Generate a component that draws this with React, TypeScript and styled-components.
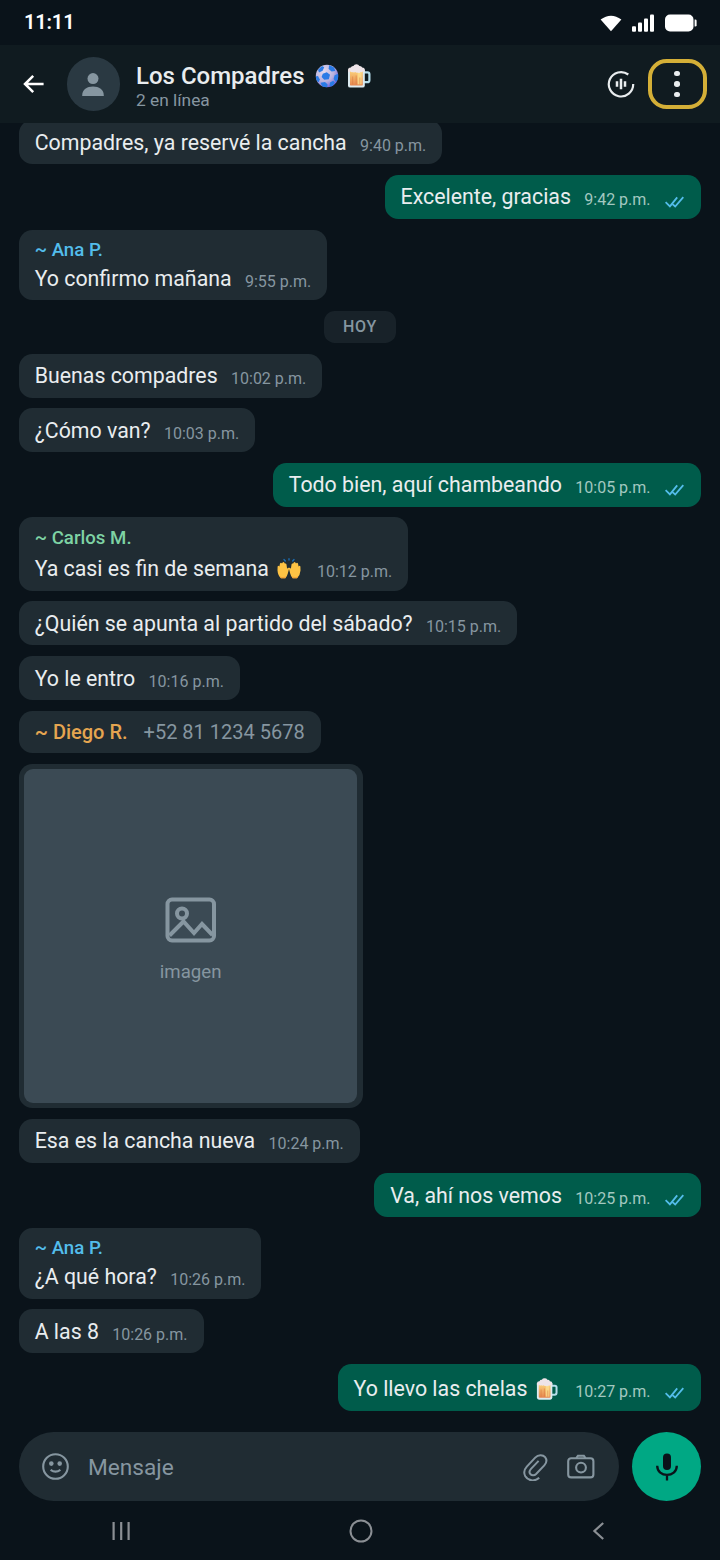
import React from "react";
import styled, { createGlobalStyle } from "styled-components";

const Global = createGlobalStyle`
  * { box-sizing: border-box; }
  html, body { margin: 0; padding: 0; background: #0a131a; }
  body { font-family: Roboto, "Liberation Sans", sans-serif; overflow: hidden; }
  svg { display: block; flex: none; }
`;

const Screen = styled.div`
  width: 720px;
  height: 1560px;
  display: flex;
  flex-direction: column;
  background: #0a131a;
  overflow: hidden;
`;

const StatusBar = styled.div`
  height: 45.33px;
  flex: none;
  display: flex;
  align-items: center;
  justify-content: space-between;
  padding: 0 23.5px 0 24px;
`;

const Clock = styled.div`
  font-size: 20px;
  line-height: 24px;
  font-weight: 600;
  color: #fff;
  margin-top: -1px;
  letter-spacing: -0.15px;
`;

const StatusIcons = styled.div`
  display: flex;
  align-items: center;
  gap: 9.8px;
  margin-top: 1px;
`;

const Header = styled.header`
  height: 77.33px;
  flex: none;
  display: flex;
  align-items: center;
  padding: 0 13.5px 0 21.33px;
  background: #101b20;
`;

const Avatar = styled.div`
  width: 53.33px;
  height: 53.33px;
  margin: 0 16px 0 20px;
  border-radius: 50%;
  background: #2a3942;
  display: flex;
  align-items: center;
  justify-content: center;
`;

const Heading = styled.div`
  flex: 1;
  padding-top: 3px;
`;

const GroupName = styled.div`
  display: flex;
  align-items: center;
  height: 29px;
  font-size: 24px;
  font-weight: 500;
  color: #e9edef;
  margin-top: 1px;
`;

const EmojiSlot = styled.span<{ $left: number; $right?: number }>`
  display: inline-flex;
  margin-left: ${(p) => p.$left}px;
  margin-right: ${(p) => p.$right ?? 0}px;
`;

const Presence = styled.div`
  font-size: 17.33px;
  line-height: 20px;
  color: #8696a0;
`;

const MenuButton = styled.div`
  width: 58.67px;
  height: 50.67px;
  margin-left: 12.6px;
  border: 4px solid #d4af37;
  border-radius: 18.67px;
  display: flex;
  flex-direction: column;
  align-items: center;
  justify-content: center;
  gap: 5.2px;
`;

const MenuDot = styled.span`
  width: 5.5px;
  height: 5.5px;
  border-radius: 50%;
  background: #e9edef;
`;

const Messages = styled.main`
  flex: 1;
  min-height: 0;
  overflow: hidden;
  display: flex;
  flex-direction: column;
  justify-content: flex-end;
  gap: 10.67px;
  padding: 0 18.67px 21.33px;
`;

const Bubble = styled.div<{ $out?: boolean; $height: number }>`
  flex: none;
  align-self: ${(p) => (p.$out ? "flex-end" : "flex-start")};
  height: ${(p) => p.$height}px;
  padding: 0 16px;
  border-radius: 13.33px;
  background: ${(p) => (p.$out ? "#005c4b" : "#202c33")};
  display: flex;
  flex-direction: column;
  justify-content: center;
`;

const Sender = styled.div<{ $color: string }>`
  font-size: 18.67px;
  line-height: 24px;
  font-weight: 500;
  color: ${(p) => p.$color};
  padding-top: 0.8px;
  margin-bottom: 2px;
`;

const Line = styled.div<{ $tall?: boolean }>`
  display: flex;
  align-items: center;
  white-space: nowrap;
  padding-top: ${(p) => (p.$tall ? 2.6 : 1)}px;
`;

const Body = styled.span`
  font-size: 21.33px;
  line-height: 28px;
  color: #e9edef;
  display: inline-flex;
  align-items: center;
`;

const Time = styled.span<{ $out?: boolean }>`
  font-size: 16px;
  line-height: 20px;
  margin-left: 13.33px;
  margin-top: 6px;
  color: ${(p) => (p.$out ? "#a3c8c0" : "#8696a0")};
`;

const TickSlot = styled.span`
  margin: 9px 0 0 14.3px;
  padding-right: 0.5px;
`;

const ContactLine = styled.div`
  display: flex;
  align-items: baseline;
  gap: 16px;
  font-size: 20px;
  color: #8696a0;
`;

const ContactName = styled.span`
  font-weight: 500;
  color: #e5a550;
`;

const DayChip = styled.div`
  flex: none;
  align-self: center;
  height: 32px;
  padding: 0 18.67px;
  border-radius: 10.67px;
  background: #182229;
  color: #8696a0;
  font-size: 16px;
  font-weight: 500;
  line-height: 32px;
  letter-spacing: 0.8px;
`;

const Photo = styled.div`
  flex: none;
  width: 344px;
  height: 344px;
  padding: 5.33px;
  border-radius: 13.33px;
  background: #202c33;
`;

const Placeholder = styled.div`
  height: 100%;
  border-radius: 9px;
  background: #3b4a54;
  display: flex;
  flex-direction: column;
  align-items: center;
  justify-content: center;
  gap: 18px;
  padding-top: 8px;
  font-size: 18.67px;
  line-height: 22px;
  color: #8696a0;
`;

const Composer = styled.div`
  flex: none;
  display: flex;
  gap: 13.33px;
  padding: 0 18.67px;
`;

const Field = styled.div`
  flex: 1;
  height: 69.33px;
  border-radius: 35px;
  background: #202c33;
  display: flex;
  align-items: center;
  padding: 0 23.3px 0 22.8px;
`;

const Hint = styled.span`
  flex: 1;
  margin-left: 17.6px;
  padding-top: 1px;
  font-size: 22.67px;
  color: #8696a0;
`;

const FieldIcons = styled.div`
  display: flex;
  align-items: center;
  gap: 19px;
`;

const MicButton = styled.div`
  width: 69.33px;
  height: 69.33px;
  border-radius: 50%;
  background: #00a884;
  display: flex;
  align-items: center;
  justify-content: center;
`;

const NavBar = styled.nav`
  flex: none;
  height: 58.67px;
  display: flex;
  align-items: center;
  justify-content: space-between;
  padding: 0 114px 0 112px;
`;

const Ball = () => (
  <svg width="24" height="24" viewBox="0 0 24 24">
    <defs>
      <radialGradient id="ball" cx="0.36" cy="0.3" r="0.82">
        <stop offset="0" stopColor="#e2daee" />
        <stop offset="0.55" stopColor="#b9b1dd" />
        <stop offset="1" stopColor="#5f50dc" />
      </radialGradient>
      <clipPath id="ballClip"><circle cx="12" cy="12" r="11.2" /></clipPath>
    </defs>
    <circle cx="12" cy="12" r="11.2" fill="url(#ball)" />
    <g fill="#2a7be6" clipPath="url(#ballClip)">
      <path d="M7.8 9.8l4-1.6 3.2 2.6-1.2 4.4-4.6.6-2.6-2.8z" />
      <path d="M3 5.800L7 2l2.200 1.200-1.600 3.600-3.600 1.600z" />
      <path d="M14.200 1l5 2.400 1 3.600-3.600.6-3-2.600z" />
      <path d="M19.600 11.200l4-1.600v6.400l-3 1.800-2-2.800z" />
      <path d="M.2 12.400l2.800-.4 1.800 3.400-1 2.800-2.800-1.400z" />
      <path d="M5.600 18.800l4.400-.8 2.600 2.600-.6 3.400H8z" />
      <path d="M15 18.600l3.200-1.800 1.600 1.600-2.400 4-2.800-.4z" />
    </g>
  </svg>
);

const Beer = ({ size = 24 }: { size?: number }) => (
  <svg width={size} height={size} viewBox="0 0 24 24">
    <defs>
      <linearGradient id="beer" x1="0" y1="0" x2="0" y2="1">
        <stop offset="0" stopColor="#fcd27c" />
        <stop offset="1" stopColor="#e5854f" />
      </linearGradient>
    </defs>
    <path d="M17 8.400h3.600q1.800 0 1.800 1.800v6q0 2-2 2H17" fill="none" stroke="#b4dce9" strokeWidth="2.2" />
    <path d="M1 5.500h16.800v15.900q0 2.200-2.200 2.200H3.200Q1 23.600 1 21.400z" fill="#dcebf0" />
    <path d="M3 6.500h12.800v13.900q0 1.200-1.200 1.200H4.200Q3 21.600 3 20.400z" fill="url(#beer)" />
    <path d="M10.600 7h4v13.400h-4z" fill="#fde08e" opacity="0.8" />
    <path d="M5.600 12.500v8M9.200 11.500v9M12.800 13.500v7" stroke="#d9773c" strokeWidth="1.2" opacity="0.45" />
    <path d="M1 8V5.800Q1.200 3.400 3.800 3.500 4.400 1.700 6.400 1.900 7.200.3 9.400.3 11.600.3 12.400 1.900 14.600 1.700 15.200 3.500q2.600 0 2.600 2.200V8q-1.200.6-2.200-.4-.8 1.200-2.200.5-1 1.600-2.400.3-1.600.8-2.600-.4Q7 8.900 6 7.900 4.600 8.700 3.400 7.600 2.200 8.400 1 8z" fill="#eee4e8" />
  </svg>
);

const Hand = () => (
  <>
    <path
      d="M4 20.300Q.8 17.200.5 12.400L.6 8.400q.8-1.300 1.800 0L3 5.500q1-1.400 2 0l.6-1.100q1.100-.9 1.800.4l.4.8q1.300-.6 1.700.9l.6 4.200.9-.9q1.300-.4 1 1.100l-1.100 4.400q-.8 3.200-2.600 5z"
      fill="#fdc344"
    />
    <path d="M4 20.300h4.300l1-1.700q-2.400.9-6.600-.1z" fill="#f2a336" />
  </>
);

const Hands = () => (
  <svg width="24" height="22" viewBox="0 0 24 22">
    <path d="M8.300 3L7 1.500M12 2.100V.7M15.700 3L17 1.500" stroke="#1c6cb0" strokeWidth="1.4" strokeLinecap="round" />
    <Hand />
    <g transform="translate(24 0) scale(-1 1)">
      <Hand />
    </g>
  </svg>
);

const Ticks = () => (
  <svg width="20" height="12" viewBox="0 0 20 12" fill="none" stroke="#53bdeb" strokeWidth="1.8">
    <path d="M.6 6.200l4.300 4.200L12.200 1.400M7.800 8.300l2.400 2.200L18.300 1.200" />
  </svg>
);

type Message = {
  text: string;
  time: string;
  out?: boolean;
  sender?: string;
  color?: string;
  emoji?: React.ReactNode;
  height?: number;
};

const MessageBubble = ({ text, time, out, sender, color = "", emoji, height }: Message) => (
  <Bubble $out={out} $height={height ?? (sender ? 70.67 : 44)}>
    {sender && <Sender $color={color}>{sender}</Sender>}
    <Line $tall={!!emoji}>
      <Body>
        {text}
        {emoji}
      </Body>
      <Time $out={out}>{time}</Time>
      {out && <TickSlot><Ticks /></TickSlot>}
    </Line>
  </Bubble>
);

export default function App() {
  return (
    <>
      <Global />
      <Screen>
        <StatusBar>
          <Clock>11:11</Clock>
          <StatusIcons>
            <svg width="22" height="17" viewBox="0 0 22 17"><path d="M.6 4.600Q11-3.200 21.400 4.600L11 16.200z" fill="#fff" /></svg>
            <svg width="23" height="18" viewBox="0 0 23 18" fill="#fff">
              <rect x="0" y="12.3" width="4" height="5.4" rx="1" />
              <rect x="6" y="8.6" width="4" height="9.1" rx="1" />
              <rect x="12" y="4.6" width="4" height="13.1" rx="1" />
              <rect x="18" y="0.4" width="4" height="17.3" rx="1" />
            </svg>
            <svg width="32" height="18" viewBox="0 0 32 18" fill="#fff">
              <rect x="0" y="0.5" width="28.5" height="17" rx="5" />
              <path d="M29.600 5.500h.6q1.400 0 1.400 1.300v4.400q0 1.300-1.400 1.300h-.6z" />
            </svg>
          </StatusIcons>
        </StatusBar>

        <Header>
          <svg width="25.33" height="24" viewBox="0 0 25.33 24" fill="none" stroke="#fff" strokeWidth="2.5">
            <path d="M22.600 12H4.600M12.200 3.800L4 12l8.200 8.200" />
          </svg>
          <Avatar>
            <svg width="24" height="24" viewBox="0 0 24 24" fill="#8696a0">
              <circle cx="12" cy="6.6" r="5.5" />
              <path d="M1.200 24v-.8C1.200 17.800 6 14.500 12 14.500s10.800 3.300 10.800 8.700v.8z" />
            </svg>
          </Avatar>
          <Heading>
            <GroupName>
              Los Compadres
              <EmojiSlot $left={10.8}><Ball /></EmojiSlot>
              <EmojiSlot $left={8}><Beer /></EmojiSlot>
            </GroupName>
            <Presence>2 en línea</Presence>
          </Heading>
          <svg width="28" height="28" viewBox="0 0 28 28" fill="none" stroke="#e9edef" strokeWidth="2.2">
            <path d="M21.300 4.500A12.200 12.200 0 1 0 26.200 14" />
            <path d="M10 11.300v5.400M14 8.700v10.600M18 11.300v5.400" strokeWidth="2.5" />
          </svg>
          <MenuButton><MenuDot /><MenuDot /><MenuDot /></MenuButton>
        </Header>

        <Messages>
          <MessageBubble text="Compadres, ya reservé la cancha" time="9:40 p.m." />
          <MessageBubble text="Excelente, gracias" time="9:42 p.m." out />
          <MessageBubble sender="~ Ana P." color="#53bdeb" text="Yo confirmo mañana" time="9:55 p.m." />
          <DayChip>HOY</DayChip>
          <MessageBubble text="Buenas compadres" time="10:02 p.m." />
          <MessageBubble text="¿Cómo van?" time="10:03 p.m." />
          <MessageBubble text="Todo bien, aquí chambeando" time="10:05 p.m." out />
          <MessageBubble
            sender="~ Carlos M."
            color="#7ed3a4"
            text="Ya casi es fin de semana"
            time="10:12 p.m."
            height={73.33}
            emoji={<EmojiSlot $left={8} $right={2.7}><Hands /></EmojiSlot>}
          />
          <MessageBubble text="¿Quién se apunta al partido del sábado?" time="10:15 p.m." />
          <MessageBubble text="Yo le entro" time="10:16 p.m." />
          <Bubble $height={42.67}>
            <ContactLine>
              <ContactName>~ Diego R.</ContactName>
              <span>+52 81 1234 5678</span>
            </ContactLine>
          </Bubble>
          <Photo>
            <Placeholder>
              <svg width="52" height="46" viewBox="0 0 52 46" fill="none" stroke="#8696a0" strokeWidth="4">
                <rect x="2.5" y="2.5" width="46.5" height="41" rx="4.5" />
                <circle cx="17" cy="16.5" r="5" />
                <path d="M4.500 38.500L18.500 24.500l10.500 11.500 8-9L47.500 38" />
              </svg>
              imagen
            </Placeholder>
          </Photo>
          <MessageBubble text="Esa es la cancha nueva" time="10:24 p.m." />
          <MessageBubble text="Va, ahí nos vemos" time="10:25 p.m." out />
          <MessageBubble sender="~ Ana P." color="#53bdeb" text="¿A qué hora?" time="10:26 p.m." />
          <MessageBubble text="A las 8" time="10:26 p.m." />
          <MessageBubble
            text="Yo llevo las chelas"
            time="10:27 p.m."
            out
            height={46.67}
            emoji={<EmojiSlot $left={8.5} $right={4}><Beer size={22} /></EmojiSlot>}
          />
        </Messages>

        <Composer>
          <Field>
            <svg width="29" height="29" viewBox="0 0 29 29" fill="none" stroke="#8696a0" strokeWidth="2.1">
              <circle cx="14.5" cy="14.5" r="12.3" />
              <circle cx="10.3" cy="11.6" r="2.3" fill="#8696a0" stroke="none" />
              <circle cx="18.7" cy="11.6" r="2.3" fill="#8696a0" stroke="none" />
              <path d="M9.600 17.800q4.900 3.600 9.800 0" />
            </svg>
            <Hint>Mensaje</Hint>
            <FieldIcons>
              <svg width="26" height="28" viewBox="0 0 26 28" fill="none" stroke="#8696a0" strokeWidth="2">
                <path d="M17.200 24.700C12.700 29 6 27.900 3.300 23.300 1.300 19.500 2.300 16.300 4.800 13.600L13.200 4.600c3-3.200 7.700-3.200 9.900-.4 2 2.700 1.400 5.800-.8 8.200l-8.200 8.600c-1.700 1.700-4.200 1.800-5.600.3-1.400-1.500-1.200-3.600.5-5.400l7.600-8" />
              </svg>
              <svg width="28" height="28" viewBox="0 0 28 28" fill="none" stroke="#8696a0" strokeWidth="2.1">
                <rect x="1.2" y="5.2" width="25.2" height="19.2" rx="3" />
                <path d="M9.300 5l1.600-2.200h6l1.600 2.200" />
                <circle cx="14" cy="14.6" r="4.9" />
              </svg>
            </FieldIcons>
          </Field>
          <MicButton>
            <svg width="24" height="28" viewBox="0 0 24 28">
              <rect x="8" y="0.5" width="8" height="16.5" rx="4" fill="#0a131a" />
              <path d="M2.200 12.800c0 12.200 19.600 12.200 19.600 0M12 21.800v5.700" fill="none" stroke="#0a131a" strokeWidth="2.3" />
            </svg>
          </MicButton>
        </Composer>

        <NavBar>
          <svg width="18" height="18" viewBox="0 0 18 18" fill="none" stroke="#8b8f94" strokeWidth="2.2">
            <path d="M1.600 0v18M9.200 0v18M16.600 0v18" />
          </svg>
          <svg width="24" height="24" viewBox="0 0 24 24" fill="none" stroke="#8b8f94" strokeWidth="2">
            <circle cx="12" cy="12" r="10.5" />
          </svg>
          <svg width="14" height="18" viewBox="0 0 14 18" fill="none" stroke="#8b8f94" strokeWidth="2.2">
            <path d="M11.200 1L2.400 9l8.800 8" />
          </svg>
        </NavBar>
      </Screen>
    </>
  );
}
